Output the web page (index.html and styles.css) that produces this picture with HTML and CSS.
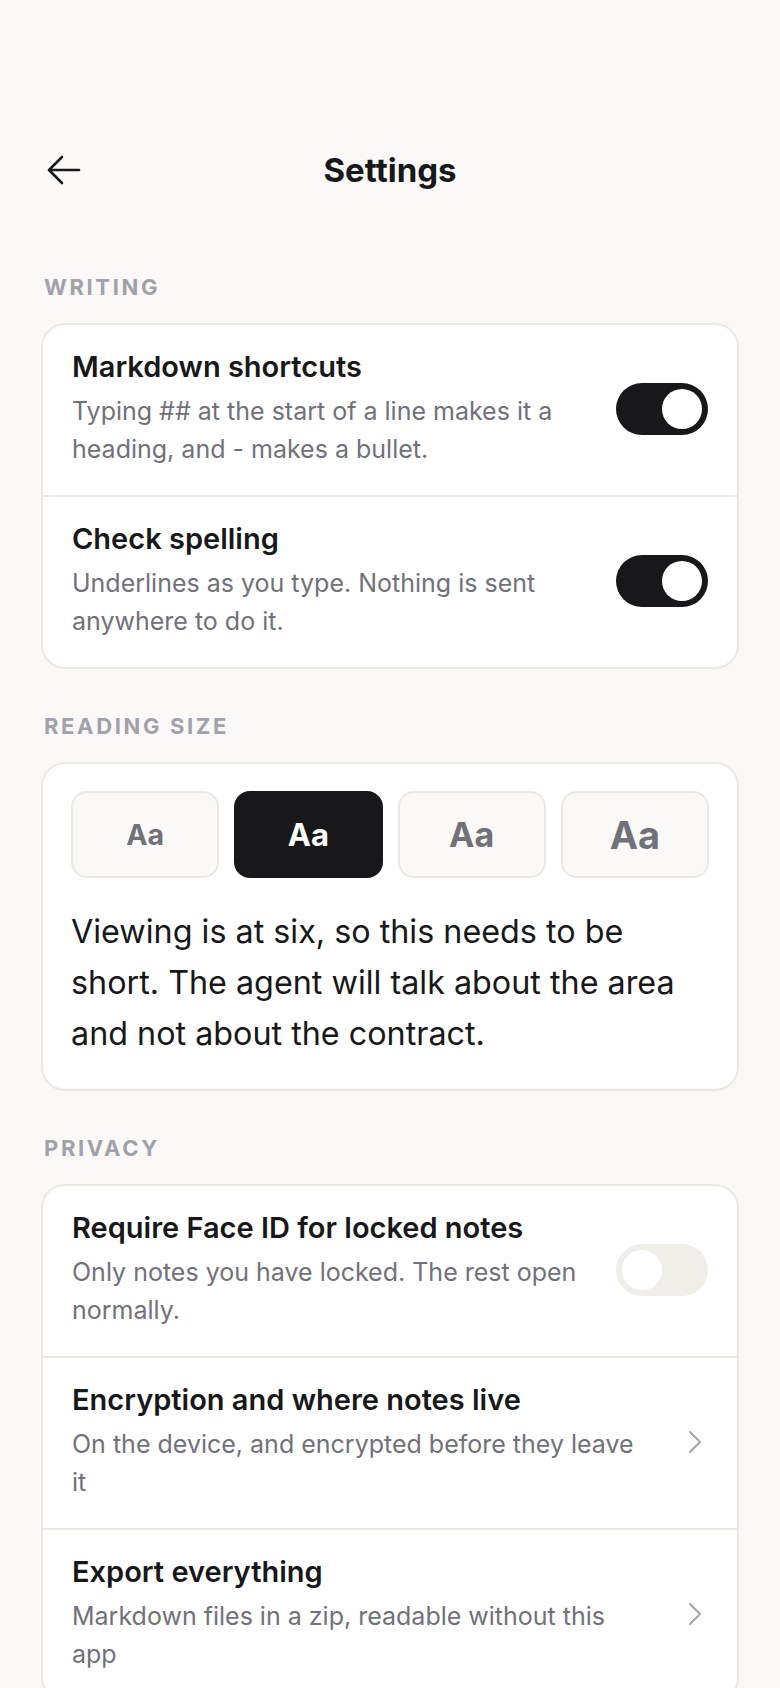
FILE: index.html
```html
<!DOCTYPE html>
<html lang="en">
<head>
  <meta charset="UTF-8" />
  <meta name="viewport" content="width=device-width, initial-scale=1.0" />
  <title>Settings</title>
  <link rel="stylesheet" href="styles.css">
</head>
<body>
  <div class="screen">
    <header class="topbar">
      <button class="back" aria-label="Back">
        <svg width="34" height="30" viewBox="0 0 34 30" fill="none" stroke="#18181b" stroke-width="2.6" stroke-linecap="round" stroke-linejoin="round">
          <path d="M32 15H3" />
          <path d="M15 2L2 15l13 13" />
        </svg>
      </button>
      <h1 class="title">Settings</h1>
      <span class="spacer"></span>
    </header>

    <h2 class="section-label">Writing</h2>
    <div class="card">
      <div class="row">
        <div class="row-text">
          <div class="row-title">Markdown shortcuts</div>
          <div class="row-desc">Typing ## at the start of a line makes it a heading, and - makes a bullet.</div>
        </div>
        <button class="toggle on" onclick="flip(this)" aria-label="Markdown shortcuts"><span class="knob"></span></button>
      </div>
      <div class="row">
        <div class="row-text">
          <div class="row-title">Check spelling</div>
          <div class="row-desc">Underlines as you type. Nothing is sent anywhere to do it.</div>
        </div>
        <button class="toggle on" onclick="flip(this)" aria-label="Check spelling"><span class="knob"></span></button>
      </div>
    </div>

    <h2 class="section-label">Reading size</h2>
    <div class="card card-pad">
      <div class="sizes">
        <button class="size s1" onclick="pickSize(this, 28.5)">Aa</button>
        <button class="size s2 active" onclick="pickSize(this, 32.3)">Aa</button>
        <button class="size s3" onclick="pickSize(this, 35.5)">Aa</button>
        <button class="size s4" onclick="pickSize(this, 39)">Aa</button>
      </div>
      <p class="preview" id="preview">Viewing is at six, so this needs to be short. The agent will talk about the area and not about the contract.</p>
    </div>

    <h2 class="section-label">Privacy</h2>
    <div class="card">
      <div class="row">
        <div class="row-text">
          <div class="row-title">Require Face ID for locked notes</div>
          <div class="row-desc">Only notes you have locked. The rest open normally.</div>
        </div>
        <button class="toggle" onclick="flip(this)" aria-label="Require Face ID"><span class="knob"></span></button>
      </div>
      <a class="row link" href="#">
        <div class="row-text">
          <div class="row-title">Encryption and where notes live</div>
          <div class="row-desc">On the device, and encrypted before they leave it</div>
        </div>
        <svg class="chev" width="14" height="24" viewBox="0 0 14 24" fill="none" stroke="#a1a1aa" stroke-width="1.8" stroke-linecap="round" stroke-linejoin="round"><path d="M2 2l10 10L2 22" /></svg>
      </a>
      <a class="row link" href="#">
        <div class="row-text">
          <div class="row-title">Export everything</div>
          <div class="row-desc">Markdown files in a zip, readable without this app</div>
        </div>
        <svg class="chev" width="14" height="24" viewBox="0 0 14 24" fill="none" stroke="#a1a1aa" stroke-width="1.8" stroke-linecap="round" stroke-linejoin="round"><path d="M2 2l10 10L2 22" /></svg>
      </a>
    </div>
  </div>

  <script>
    function flip(el) {
      el.classList.toggle('on');
    }

    function pickSize(el, px) {
      document.querySelectorAll('.size').forEach(function (b) { b.classList.remove('active'); });
      el.classList.add('active');
      document.getElementById('preview').style.fontSize = px + 'px';
    }
  </script>
</body>
</html>
```

FILE: styles.css
```css
* { margin: 0; padding: 0; box-sizing: border-box; }
body {
  font-family: Inter, "Noto Sans", sans-serif;
  background-color: #faf9f7;
  color: #18181b;
}
button { font-family: inherit; border: none; background: none; cursor: pointer; }
a { color: inherit; text-decoration: none; }

.screen {
  padding: 114px 41px 40px;
}

/* header */
.topbar {
  display: flex;
  align-items: center;
  justify-content: space-between;
  height: 112px;
}
.back {
  width: 50px;
  height: 50px;
  display: flex;
  align-items: center;
  padding-left: 6px;
}
.spacer { width: 50px; }
.title {
  font-size: 33px;
  font-weight: 700;
}

/* section labels */
.section-label {
  font-size: 22px;
  line-height: 28px;
  font-weight: 700;
  letter-spacing: 0.12em;
  text-transform: uppercase;
  color: #a1a1aa;
  padding-left: 3px;
  margin: 43px 0 22px;
}
.topbar + .section-label { margin-top: 47px; }

/* cards */
.card {
  background: #fff;
  border: 2px solid #ebe9e4;
  border-radius: 24px;
  overflow: hidden;
}
.card-pad { padding: 27px 28px 30px; }

.row {
  display: flex;
  align-items: center;
  gap: 30px;
  padding: 24px 29px 27px;
}
.row + .row { border-top: 2px solid #ebe9e4; }
.row-text { flex: 1; min-width: 0; }
.link { gap: 48px; }
.row-title {
  font-size: 29px;
  line-height: 36px;
  font-weight: 600;
}
.row-desc {
  margin-top: 7px;
  font-size: 25px;
  line-height: 38px;
  color: #71717a;
}

/* switch */
.toggle {
  flex: none;
  width: 92px;
  height: 52px;
  border-radius: 26px;
  background: #efeee9;
  padding: 6px;
  display: flex;
}
.toggle .knob {
  width: 40px;
  height: 40px;
  border-radius: 50%;
  background: #fff;
  transition: transform 0.15s;
}
.toggle.on { background: #18181b; }
.toggle.on .knob { transform: translateX(40px); }

.chev { flex: none; margin-right: 6px; }

/* reading size */
.sizes {
  display: grid;
  grid-template-columns: repeat(4, 1fr);
  gap: 15px;
}
.size {
  height: 87px;
  border: 2px solid #ebe9e4;
  border-radius: 16px;
  background: #faf9f7;
  color: #71717a;
  font-weight: 700;
}
.size.active { background: #18181b; border-color: #18181b; color: #fff; }
.s1 { font-size: 28.5px; }
.s2 { font-size: 31px; }
.s3 { font-size: 34px; }
.s4 { font-size: 38px; }

.preview {
  margin-top: 28px;
  padding-right: 20px;
  font-size: 32.3px;
  line-height: 51px;
  color: #18181b;
}
```
